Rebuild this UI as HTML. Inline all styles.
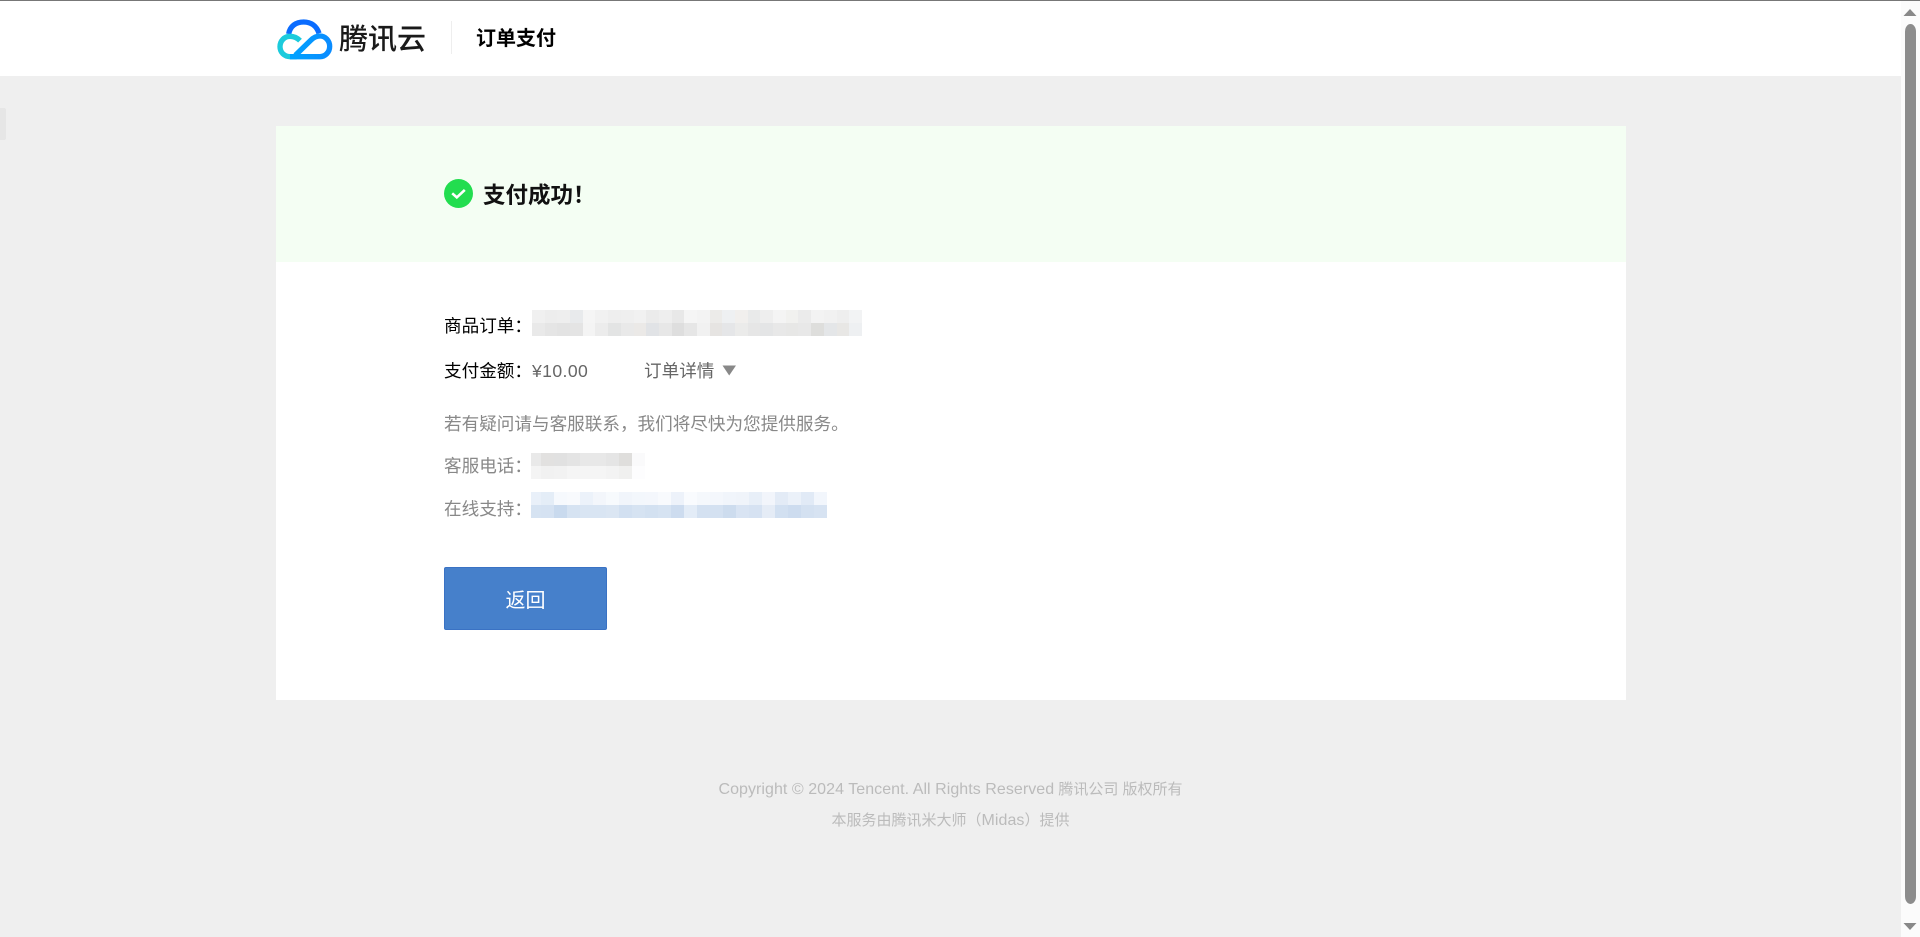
<!DOCTYPE html>
<html lang="zh-CN">
<head>
<meta charset="utf-8">
<title>订单支付</title>
<style>
html,body{margin:0;padding:0;width:1920px;height:937px;overflow:hidden;background:#efefef}
body{position:relative;font-family:"Liberation Sans","Noto Sans CJK SC",sans-serif}
.a{position:absolute;white-space:nowrap}
.t{font-size:17.6px;line-height:26px;height:26px}
.blur{position:absolute;display:grid;grid-auto-rows:13px}
.blur i{display:block}
.l{font-size:16px;letter-spacing:.05px}
</style>
</head>
<body>
<div class="a" style="left:0;top:0;width:1901px;height:76px;background:#fff"></div>
<div class="a" style="left:0;top:0;width:1920px;height:1px;background:#777"></div>

<svg class="a" style="left:270px;top:10px" width="70" height="55" viewBox="0 0 210 165">
<defs>
<linearGradient id="g" x1="0" y1="0" x2="1" y2="0"><stop offset="0" stop-color="#00a3ff"/><stop offset="1" stop-color="#0a8cff"/></linearGradient>
</defs>
<path d="M56 72C60 48 78 36 101 36C123 36 140 48 147 70" fill="none" stroke="#0a6cff" stroke-width="16"/>
<path d="M90 92C82 84 72 79 60 79C43 79 30 93 30 110C30 127 43 140 60 140H80" fill="none" stroke="#1ccbdc" stroke-width="16"/>
<path d="M60 140H150C166 140 179 126 179 109C179 92 166 78 150 78C139 78 130 83 122 91L76 136" fill="none" stroke="url(#g)" stroke-width="16"/>
</svg>
<div class="a" style="left:339px;top:17px;font-size:29px;line-height:46px;font-weight:500;color:#1a1a1a">腾讯云</div>
<div class="a" style="left:451px;top:21px;width:1px;height:33px;background:#eee"></div>
<div class="a" style="left:476px;top:24px;font-size:20px;line-height:30px;font-weight:700;color:#000">订单支付</div>

<div class="a" style="left:0;top:108px;width:6px;height:32px;background:#e6e6e6;border-radius:0 2px 2px 0"></div>

<div class="a" style="left:276px;top:126px;width:1350px;height:574px;background:#fff"></div>
<div class="a" style="left:276px;top:126px;width:1350px;height:136px;background:#f4fef3"></div>

<svg class="a" style="left:444px;top:179px" width="29" height="29" viewBox="0 0 29 29">
<circle cx="14.5" cy="14.5" r="14.5" fill="#22dd4f"/>
<path d="M8.2 14.3L12.8 18.4L20.8 10.9" fill="none" stroke="#fff" stroke-width="2.6"/>
</svg>
<div class="a" style="left:483px;top:179px;font-size:22.5px;line-height:34px;font-weight:700;color:#111">支付成功&#xFF01;</div>

<div class="a t" style="left:444px;top:313px;color:#000">商品订单&#xFF1A;</div>
<div class="blur" style="left:532px;top:310px;grid-template-columns:repeat(26,12.7px)">
<i style="background:#f0f0f0"></i><i style="background:#ededed"></i><i style="background:#eeeeee"></i><i style="background:#e8eaec"></i><i style="background:#f5f5f5"></i><i style="background:#f1f1f1"></i><i style="background:#eeeeee"></i><i style="background:#efefef"></i><i style="background:#f1f1f1"></i><i style="background:#ebebeb"></i><i style="background:#eeeeee"></i><i style="background:#e8e8e8"></i><i style="background:#f5f5f5"></i><i style="background:#f3f3f3"></i><i style="background:#ecebe9"></i><i style="background:#eef0f2"></i><i style="background:#f1efed"></i><i style="background:#e9eaea"></i><i style="background:#eeeeee"></i><i style="background:#f4f4f4"></i><i style="background:#f1f1ef"></i><i style="background:#ebebeb"></i><i style="background:#f3f3f3"></i><i style="background:#f1f1f1"></i><i style="background:#eeeeee"></i><i style="background:#f2f3f4"></i>
<i style="background:#e9e9e9"></i><i style="background:#e5e5e5"></i><i style="background:#e3e3e3"></i><i style="background:#e4e4e4"></i><i style="background:#f4f4f4"></i><i style="background:#ececec"></i><i style="background:#e3e4e4"></i><i style="background:#e9e9e9"></i><i style="background:#ebe9e7"></i><i style="background:#e1e3e6"></i><i style="background:#e7e7e7"></i><i style="background:#dedede"></i><i style="background:#e6e6e6"></i><i style="background:#f1f1f1"></i><i style="background:#e6e4e2"></i><i style="background:#e5e6e8"></i><i style="background:#ebebea"></i><i style="background:#e6e6e6"></i><i style="background:#e4e5e6"></i><i style="background:#e8e8e8"></i><i style="background:#e7e7e6"></i><i style="background:#e8e8e8"></i><i style="background:#dededc"></i><i style="background:#e4e6e8"></i><i style="background:#e8e7e5"></i><i style="background:#eef0f2"></i>
</div>

<div class="a t" style="left:444px;top:358px;color:#000">支付金额&#xFF1A;</div>
<div class="a t" style="left:532px;top:358px;color:#666;letter-spacing:.4px">¥10.00</div>
<div class="a t" style="left:644px;top:358px;color:#666">订单详情</div>
<svg class="a" style="left:722px;top:365px" width="15" height="11" viewBox="0 0 15 11"><path d="M0.5 0.5H14L7.2 10.5Z" fill="#888"/></svg>

<div class="a t" style="left:444px;top:411px;color:#888">若有疑问请与客服联系&#xFF0C;我们将尽快为您提供服务。</div>
<div class="a t" style="left:444px;top:453px;color:#888">客服电话&#xFF1A;</div>
<div class="blur" style="left:531px;top:453px;grid-template-columns:10px repeat(7,13px) 13px">
<i style="background:#e9e9e9"></i><i style="background:#e2e1e0"></i><i style="background:#e1e1e1"></i><i style="background:#e4e4e4"></i><i style="background:#e8e8e8"></i><i style="background:#e8e8e8"></i><i style="background:#e5e5e5"></i><i style="background:#dfdedc"></i><i style="background:#fafafb"></i>
<i style="background:#f4f4f4"></i><i style="background:#f1f1f1"></i><i style="background:#f2f2f2"></i><i style="background:#f5f5f5"></i><i style="background:#f5f5f5"></i><i style="background:#f5f5f5"></i><i style="background:#f3f3f3"></i><i style="background:#f0f0ef"></i><i style="background:#fdfdfe"></i>
</div>

<div class="a t" style="left:444px;top:496px;color:#888">在线支持&#xFF1A;</div>
<div class="blur" style="left:531px;top:492px;grid-template-columns:10px repeat(22,13px)">
<i style="background:#e9f0f9"></i><i style="background:#e4edf7"></i><i style="background:#f6f9fd"></i><i style="background:#f8fafd"></i><i style="background:#ecf2fa"></i><i style="background:#f3f6fb"></i><i style="background:#f7fafd"></i><i style="background:#f1f5fb"></i><i style="background:#f3f7fc"></i><i style="background:#f4f7fc"></i><i style="background:#f8fafd"></i><i style="background:#edf2fa"></i><i style="background:#f9fbfe"></i><i style="background:#f5f8fc"></i><i style="background:#f4f7fc"></i><i style="background:#f1f5fb"></i><i style="background:#f0f4fa"></i><i style="background:#e8eff8"></i><i style="background:#f2f5fb"></i><i style="background:#e3ebf6"></i><i style="background:#ebf1f9"></i><i style="background:#e1eaf6"></i><i style="background:#f2f6fc"></i>
<i style="background:#d6e3f2"></i><i style="background:#d5e2f2"></i><i style="background:#c9daee"></i><i style="background:#d6e3f2"></i><i style="background:#d9e5f3"></i><i style="background:#d9e5f3"></i><i style="background:#dbe6f3"></i><i style="background:#d2e0f1"></i><i style="background:#d6e3f2"></i><i style="background:#d3e1f1"></i><i style="background:#d6e3f2"></i><i style="background:#cddcef"></i><i style="background:#e3ecf7"></i><i style="background:#d4e1f1"></i><i style="background:#d4e1f1"></i><i style="background:#cddcee"></i><i style="background:#d9e4f3"></i><i style="background:#d6e2f2"></i><i style="background:#e5ecf6"></i><i style="background:#d2e0f1"></i><i style="background:#cddcef"></i><i style="background:#d4e1f1"></i><i style="background:#d7e3f2"></i>
</div>

<div class="a" style="left:444px;top:567px;width:161px;height:61px;background:#4680cb;border:1px solid #3a72c4;border-radius:2px;color:#fff;font-size:20px;line-height:66px;text-align:center">返回</div>

<div class="a" style="left:0;width:1901px;top:778px;text-align:center;font-size:15px;line-height:24px;color:#bbb"><span class="l">Copyright © 2024 Tencent. All Rights Reserved</span> 腾讯公司 版权所有</div>
<div class="a" style="left:0;width:1901px;top:809px;text-align:center;font-size:15px;line-height:24px;color:#bbb">本服务由腾讯米大师&#xFF08;<span class="l">Midas</span>&#xFF09;提供</div>

<div class="a" style="left:1901px;top:1px;width:19px;height:936px;background:#fbfbfb"></div>
<svg class="a" style="left:1901px;top:0" width="19" height="937" viewBox="0 0 19 937">
<path d="M9 9L15.5 16H2.5Z" fill="#888"/>
<path d="M4 31.5A5.5 7.5 0 0 1 15 31.5V896.5A5.5 7.5 0 0 1 4 896.5Z" fill="#8c8c8c"/>
<path d="M2.5 923H15.5L9 930Z" fill="#888"/>
</svg>
</body>
</html>
